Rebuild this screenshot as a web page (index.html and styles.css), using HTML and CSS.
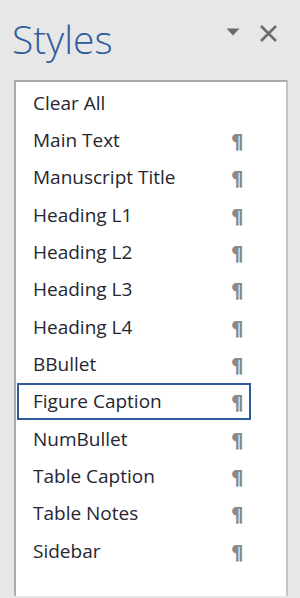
FILE: index.html
```html
<!DOCTYPE html>
<html>
<head>
<meta charset="utf-8">
<link rel="stylesheet" href="styles.css">
</head>
<body>
<div class="pane">
  <div class="header">
    <h1 class="title">Styles</h1>
    <div class="tools">
      <svg class="drop" width="14" height="8" viewBox="0 0 14 8"><path d="M0.5 0.5 L13.5 0.5 L7 7.5 Z" fill="#6b6b6b"/></svg>
      <svg class="close" width="19" height="19" viewBox="0 0 19 19"><path d="M2 2 L17 17 M17 2 L2 17" stroke="#6b6b6b" stroke-width="2.6" fill="none"/></svg>
    </div>
  </div>
  <div class="list">
    <div class="row"><span class="name">Clear All</span></div>
    <div class="row"><span class="name">Main Text</span><span class="pil">¶</span></div>
    <div class="row"><span class="name">Manuscript Title</span><span class="pil">¶</span></div>
    <div class="row"><span class="name">Heading L1</span><span class="pil">¶</span></div>
    <div class="row"><span class="name">Heading L2</span><span class="pil">¶</span></div>
    <div class="row"><span class="name">Heading L3</span><span class="pil">¶</span></div>
    <div class="row"><span class="name">Heading L4</span><span class="pil">¶</span></div>
    <div class="row"><span class="name">BBullet</span><span class="pil">¶</span></div>
    <div class="row selected"><span class="name">Figure Caption</span><span class="pil">¶</span></div>
    <div class="row"><span class="name">NumBullet</span><span class="pil">¶</span></div>
    <div class="row"><span class="name">Table Caption</span><span class="pil">¶</span></div>
    <div class="row"><span class="name">Table Notes</span><span class="pil">¶</span></div>
    <div class="row"><span class="name">Sidebar</span><span class="pil">¶</span></div>
  </div>
</div>
</body>
</html>
```
FILE: styles.css
```css
html, body {
  margin: 0;
  padding: 0;
  width: 300px;
  height: 598px;
  overflow: hidden;
  background: #e7e7e7;
}
.pane {
  display: flex;
  flex-direction: column;
  height: 596px;
  padding: 0 12px 0 14px;
  box-sizing: border-box;
}
.header {
  height: 80px;
  display: flex;
  align-items: flex-start;
  justify-content: space-between;
  flex-shrink: 0;
}
.title {
  margin: 13px 0 0 -2px;
  font-family: "Open Sans", "Liberation Sans", sans-serif;
  font-weight: 300;
  font-size: 39px;
  line-height: 52px;
  color: #2f5b9c;
}
.tools {
  display: flex;
  align-items: flex-start;
  gap: 19px;
  margin-top: 24px;
  margin-right: 10px;
}
.drop {
  display: block;
  margin-top: 4px;
}
.close {
  display: block;
}
.list {
  flex: 1;
  background: #ffffff;
  border: 2px solid #ababab;
  border-right-color: #c4c4c4;
  border-bottom: none;
  padding: 2px 35px 0 1px;
}
.row {
  height: 37.33px;
  box-sizing: border-box;
  border: 2px solid transparent;
  display: flex;
  align-items: center;
  justify-content: space-between;
  padding: 0 6px 0 14px;
  font-family: "Open Sans", "Liberation Sans", sans-serif;
  font-size: 19px;
  color: #262630;
}
.row.selected {
  border-color: #2e5b9e;
}
.pil {
  font-family: "DejaVu Sans", sans-serif;
  font-weight: bold;
  font-size: 19px;
  line-height: 20px;
  color: #8a8a8a;
  margin-top: 2px;
  text-shadow: 0.6px 0 0 #8a8a8a;
}
```
